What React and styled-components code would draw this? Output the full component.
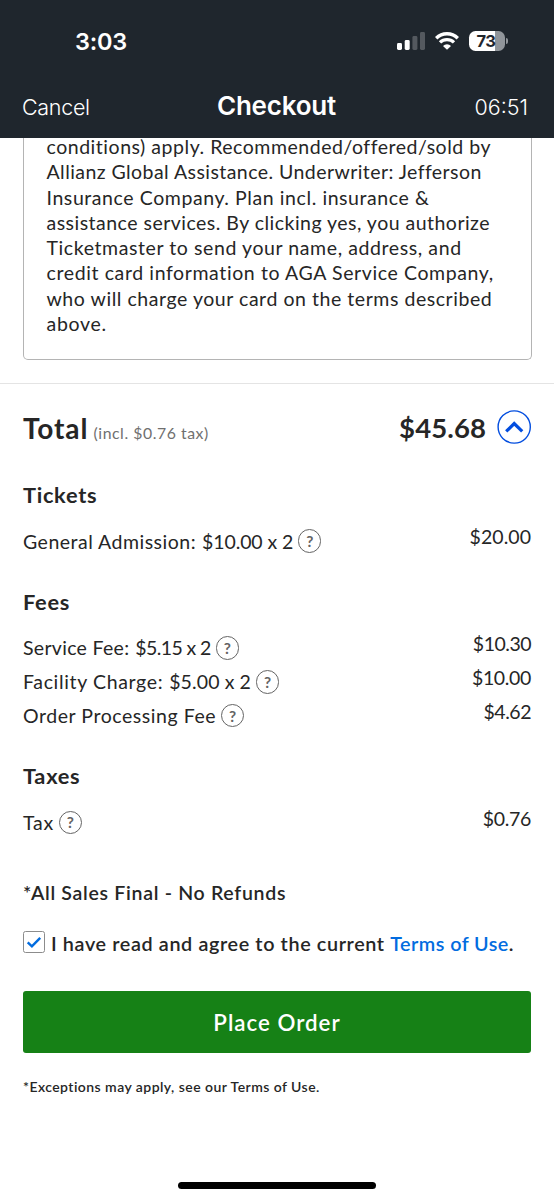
import React, { useState } from 'react';
import styled, { createGlobalStyle } from 'styled-components';

const COLOR = {
    HEADER: '#1f262d',
    TEXT: '#262626',
    MUTED: '#6f6f6f',
    BLUE: '#024ddf',
    LINK: '#026cdf',
    GREEN: '#168116',
};

const GlobalStyle = createGlobalStyle`
    * {
        box-sizing: border-box;
    }

    body {
        margin: 0;
        background-color: white;
    }
`;

const Screen = styled.div`
    width: 554px;
    height: 1200px;
    display: flex;
    flex-direction: column;
    background-color: white;
    color: ${COLOR.TEXT};
    font-family: Lato, 'Open Sans', sans-serif;
`;

const Header = styled.header`
    flex: none;
    height: 137.5px;
    background-color: ${COLOR.HEADER};
    color: white;
    font-family: Inter, 'Liberation Sans', sans-serif;
`;

const StatusBar = styled.div`
    display: flex;
    align-items: center;
    justify-content: space-between;
    height: 82px;
    padding: 0 46px 0 75px;
`;

const Clock = styled.div`
    font-size: 23.5px;
    font-weight: 600;
    letter-spacing: -0.2px;
`;

const StatusIcons = styled.div`
    display: flex;
    align-items: center;
    gap: 10px;
`;

const Battery = styled.div`
    display: flex;
    align-items: center;
    gap: 1px;
`;

const BatteryBody = styled.div`
    width: 36px;
    height: 20px;
    padding-right: 2px;
    border-radius: 6.5px;
    background: linear-gradient(to right, white 73%, #90959a 73%);
    color: ${COLOR.HEADER};
    font-size: 16.5px;
    font-weight: 700;
    line-height: 20px;
    letter-spacing: -0.6px;
    text-align: center;
`;

const BatteryTip = styled.div`
    width: 2px;
    height: 6px;
    border-radius: 0 2px 2px 0;
    background-color: #90959a;
`;

const NavBar = styled.nav`
    display: grid;
    grid-template-columns: 1fr auto 1fr;
    align-items: baseline;
    padding: 8px 26px 0 22px;
`;

const NavText = styled.div`
    font-size: 21.5px;
    font-weight: 300;
    letter-spacing: ${({ $spacing }) => $spacing}px;
    text-align: ${({ $align }) => $align};
`;

const NavTitle = styled.div`
    padding-left: 3px;
    font-size: 26px;
    font-weight: 600;
    line-height: 32px;
    letter-spacing: -0.2px;
`;

const Content = styled.main`
    flex: 1;
    display: flex;
    flex-direction: column;
`;

const InsuranceCard = styled.section`
    margin: 0 22.5px;
    padding: 0 23px 23px;
    border: 1.5px solid #b4b4b4;
    border-top: none;
    border-radius: 0 0 5px 5px;
`;

const InsuranceText = styled.p`
    margin: -3.5px 0 0;
    font-size: 19.5px;
    line-height: 25.3px;
`;

const Line = styled.span`
    display: block;
    white-space: nowrap;
    letter-spacing: ${({ $spacing }) => $spacing}px;
`;

const Divider = styled.hr`
    width: 100%;
    height: 1px;
    margin: 23px 0 0;
    border: none;
    background-color: #e4e4e4;
`;

const Summary = styled.section`
    display: flex;
    flex-direction: column;
    padding: 26px 23px 0;
`;

const TotalRow = styled.div`
    display: flex;
    align-items: center;
    height: 34px;
    margin-bottom: 6.9px;
`;

const TotalLabel = styled.div`
    flex: 1;
    padding-top: 6px;
    font-size: 28px;
    font-weight: 700;
    line-height: 34px;
    letter-spacing: 0.9px;
`;

const TaxNote = styled.span`
    margin-left: -2.5px;
    color: ${COLOR.MUTED};
    font-size: 15.8px;
    font-weight: 400;
    letter-spacing: 0.55px;
`;

const TotalAmount = styled.div`
    padding-top: 2px;
    margin-right: 11px;
    font-size: 27.5px;
    font-weight: 700;
    line-height: 34px;
    letter-spacing: 0.1px;
`;

const ToggleButton = styled.button`
    display: flex;
    padding: 0;
    border: none;
    background: none;
    cursor: pointer;
`;

const GroupTitle = styled.h3`
    margin: 31px 0 16px;
    font-size: 21.8px;
    font-weight: 700;
    line-height: 26px;
    letter-spacing: 0.7px;
`;

const ChargeRow = styled.div`
    display: flex;
    align-items: center;
    height: 33.8px;
    font-size: 19.5px;
`;

const ChargeName = styled.span`
    letter-spacing: ${({ $spacing }) => $spacing}px;
`;

const ChargeQuantity = styled.span`
    margin-left: 6px;
    letter-spacing: ${({ $spacing }) => $spacing}px;
`;

const HelpBadge = styled.span`
    display: flex;
    align-items: center;
    justify-content: center;
    width: 23.5px;
    height: 23.5px;
    margin-left: 4.8px;
    border: 1.3px solid #646464;
    border-radius: 50%;
    color: #646464;
    font-size: 15.5px;
    font-weight: 700;
    line-height: 20px;
`;

const ChargeAmount = styled.span`
    margin-left: auto;
    padding-bottom: 8.4px;
    letter-spacing: ${({ $spacing }) => $spacing}px;
`;

const FinalNote = styled.div`
    margin-top: 41.5px;
    font-size: 19.5px;
    font-weight: 600;
    line-height: 24px;
    letter-spacing: 0.7px;
`;

const AgreeRow = styled.label`
    display: flex;
    align-items: center;
    height: 22px;
    margin-top: 26px;
    font-size: 19.8px;
    font-weight: 600;
    letter-spacing: 0.62px;
    white-space: pre;
`;

const CheckBox = styled.span`
    display: flex;
    align-items: center;
    justify-content: center;
    width: 22px;
    height: 22px;
    margin-right: 6px;
    border: 1.4px solid #8c8c8c;
    border-radius: 2.5px;
`;

const AgreeText = styled.span`
    padding-top: 2px;
`;

const TermsLink = styled.span`
    color: ${COLOR.LINK};
    letter-spacing: 0.45px;
`;

const PlaceOrderButton = styled.button`
    height: 62px;
    margin-top: 38.5px;
    border: none;
    border-radius: 3px;
    background-color: ${COLOR.GREEN};
    color: white;
    font-family: inherit;
    font-size: 22.3px;
    font-weight: 600;
    letter-spacing: 1px;
    cursor: pointer;
`;

const Footnote = styled.div`
    margin-top: 24.3px;
    font-size: 14px;
    font-weight: 600;
    line-height: 18px;
    letter-spacing: 0.45px;
`;

const HomeIndicator = styled.div`
    width: 198px;
    height: 7px;
    margin: auto auto 11.5px;
    border-radius: 4px;
    background-color: black;
`;

const INSURANCE_LINES = [
    { text: 'conditions) apply. Recommended/offered/sold by', spacing: 0.53 },
    { text: 'Allianz Global Assistance. Underwriter: Jefferson', spacing: 0.44 },
    { text: 'Insurance Company. Plan incl. insurance &', spacing: 0.58 },
    { text: 'assistance services. By clicking yes, you authorize', spacing: 0.48 },
    { text: 'Ticketmaster to send your name, address, and', spacing: 0.59 },
    { text: 'credit card information to AGA Service Company,', spacing: 0.61 },
    { text: 'who will charge your card on the terms described', spacing: 0.55 },
    { text: 'above.', spacing: 0.7 },
];

const GROUPS = [
    {
        title: 'Tickets',
        charges: [
            { name: 'General Admission:', spacing: 0.49, quantity: '$10.00 x 2', quantitySpacing: -0.1, amount: '$20.00', amountSpacing: 0.05 },
        ],
    },
    {
        title: 'Fees',
        charges: [
            { name: 'Service Fee:', spacing: 0.3, quantity: '$5.15 x 2', quantitySpacing: -0.6, amount: '$10.30', amountSpacing: -0.5 },
            { name: 'Facility Charge:', spacing: 0.65, quantity: '$5.00 x 2', quantitySpacing: 0.1, amount: '$10.00', amountSpacing: -0.35 },
            { name: 'Order Processing Fee', spacing: 0.55, amount: '$4.62', amountSpacing: -0.45 },
        ],
    },
    {
        title: 'Taxes',
        charges: [
            { name: 'Tax', spacing: 0.7, amount: '$0.76', amountSpacing: -0.3 },
        ],
    },
];

const SignalIcon = () => (
    <svg width="28" height="18" viewBox="0 0 28 18" fill="white">
        <rect x="0" y="11" width="5" height="7" rx="1.4" />
        <rect x="7.7" y="8" width="5" height="10" rx="1.4" />
        <rect x="15.4" y="4" width="5" height="14" rx="1.4" opacity="0.24" />
        <rect x="23" y="0" width="5" height="18" rx="1.4" opacity="0.24" />
    </svg>
);

const WifiIcon = () => (
    <svg width="24" height="18" viewBox="0 0 24 18">
        <path d="M1.2 6.2a15.4 15.4 0 0 1 21.6 0" fill="none" stroke="white" strokeWidth="3.4" />
        <path d="M5 10.4a10 10 0 0 1 14 0" fill="none" stroke="white" strokeWidth="3.3" />
        <path d="M12 17.8L8 13.9a5.7 5.7 0 0 1 8 0z" fill="white" />
    </svg>
);

const ChevronCircleIcon = ({ open }) => (
    <svg width="34" height="34" viewBox="0 0 34 34" fill="none" stroke={COLOR.BLUE}>
        <circle cx="17.2" cy="17" r="16.1" strokeWidth="1.4" />
        <path
            d={open ? 'M9.2 21.4L17.2 13.6L25.2 21.4' : 'M9.2 12.6L17.2 20.4L25.2 12.6'}
            strokeWidth="3.2"
        />
    </svg>
);

const CheckIcon = () => (
    <svg width="16" height="14" viewBox="0 0 16 14" fill="none">
        <path d="M1.7 7.4L5.9 11.4L14.2 2.8" stroke={COLOR.LINK} strokeWidth="2.4" />
    </svg>
);

const Charge = ({ charge }) => (
    <ChargeRow>
        <ChargeName $spacing={charge.spacing}>{charge.name}</ChargeName>
        { charge.quantity && (
            <ChargeQuantity $spacing={charge.quantitySpacing}>
                {charge.quantity}
            </ChargeQuantity>
        )}
        <HelpBadge>?</HelpBadge>
        <ChargeAmount $spacing={charge.amountSpacing}>
            {charge.amount}
        </ChargeAmount>
    </ChargeRow>
);

const ChargeGroup = ({ group }) => (
    <>
        <GroupTitle>{group.title}</GroupTitle>
        { group.charges.map((charge) => (
            <Charge key={charge.name} charge={charge} />
        ))}
    </>
);

export default function App()
{
    const [open, setOpen] = useState(true);
    const [agreed, setAgreed] = useState(true);

    return (
        <Screen>
            <GlobalStyle />
            <Header>
                <StatusBar>
                    <Clock>3:03</Clock>
                    <StatusIcons>
                        <SignalIcon />
                        <WifiIcon />
                        <Battery>
                            <BatteryBody>73</BatteryBody>
                            <BatteryTip />
                        </Battery>
                    </StatusIcons>
                </StatusBar>
                <NavBar>
                    <NavText $align="left" $spacing={-0.3}>Cancel</NavText>
                    <NavTitle>Checkout</NavTitle>
                    <NavText $align="right" $spacing={0}>06:51</NavText>
                </NavBar>
            </Header>
            <Content>
                <InsuranceCard>
                    <InsuranceText>
                        { INSURANCE_LINES.map((line) => (
                            <Line key={line.text} $spacing={line.spacing}>
                                {line.text}
                            </Line>
                        ))}
                    </InsuranceText>
                </InsuranceCard>
                <Divider />
                <Summary>
                    <TotalRow>
                        <TotalLabel>
                            Total <TaxNote>(incl. $0.76 tax)</TaxNote>
                        </TotalLabel>
                        <TotalAmount>$45.68</TotalAmount>
                        <ToggleButton onClick={() => setOpen(!open)}>
                            <ChevronCircleIcon open={open} />
                        </ToggleButton>
                    </TotalRow>
                    { open && GROUPS.map((group) => (
                        <ChargeGroup key={group.title} group={group} />
                    ))}
                    <FinalNote>*All Sales Final - No Refunds</FinalNote>
                    <AgreeRow onClick={() => setAgreed(!agreed)}>
                        <CheckBox>{ agreed && <CheckIcon /> }</CheckBox>
                        <AgreeText>
                            I have read and agree to the current <TermsLink>Terms of Use</TermsLink>.
                        </AgreeText>
                    </AgreeRow>
                    <PlaceOrderButton>Place Order</PlaceOrderButton>
                    <Footnote>*Exceptions may apply, see our Terms of Use.</Footnote>
                </Summary>
                <HomeIndicator />
            </Content>
        </Screen>
    );
}
